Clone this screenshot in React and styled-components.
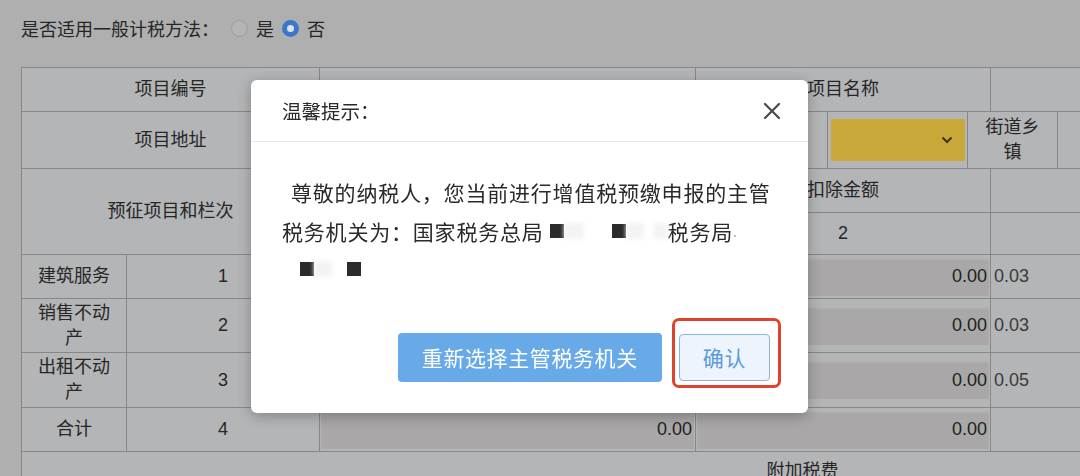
import React from 'react'
import styled, { createGlobalStyle } from 'styled-components'

const rows = [
  { label: '建筑服务', no: 1, a: '0.00', b: '0.00', rate: '0.03', h: 44 },
  { label: '销售不动产', no: 2, a: '0.00', b: '0.00', rate: '0.03', h: 54 },
  { label: '出租不动产', no: 3, a: '0.00', b: '0.00', rate: '0.05', h: 55 },
  { label: '合计', no: 4, a: '0.00', b: '0.00', rate: '', h: 44 },
]

const colWidths = [105, 193, 376, 132, 140, 23, 67, 526]

export default function App() {
  return (
    <>
      <GlobalStyle />
      <Page>
        <MethodRow>
          <Question>是否适用一般计税方法：</Question>
          <Radio />
          <span>是</span>
          <Radio $checked />
          <span>否</span>
        </MethodRow>

        <FormTable>
          <colgroup>
            {colWidths.map((w, i) => (
              <col key={i} style={{ width: w }} />
            ))}
          </colgroup>
          <tbody>
            <Row $h={44}>
              <Cell colSpan={2}>项目编号</Cell>
              <Cell></Cell>
              <Cell colSpan={3}>项目名称</Cell>
              <Cell colSpan={2}></Cell>
            </Row>
            <Row $h={57}>
              <Cell colSpan={2}>项目地址</Cell>
              <Cell></Cell>
              <Cell></Cell>
              <Cell>
                <Select>
                  <svg width="12" height="8" viewBox="0 0 12 8">
                    <path d="M1.5 1.5 L6 6 L10.5 1.5" fill="none" stroke="#3d3216" strokeWidth="2" />
                  </svg>
                </Select>
              </Cell>
              <Cell colSpan={2} $narrow>街道乡镇</Cell>
              <Cell></Cell>
            </Row>
            <Row $h={44}>
              <Cell colSpan={2} rowSpan={2}>预征项目和栏次</Cell>
              <Cell></Cell>
              <Cell colSpan={3}>扣除金额</Cell>
              <Cell colSpan={2}></Cell>
            </Row>
            <Row $h={42}>
              <Cell></Cell>
              <Cell colSpan={3}>2</Cell>
              <Cell colSpan={2}></Cell>
            </Row>
            {rows.map((r) => (
              <Row key={r.no} $h={r.h}>
                <Cell $narrow>{r.label}</Cell>
                <Cell>{r.no}</Cell>
                <Cell $flush>
                  <ReadOnly>{r.a}</ReadOnly>
                </Cell>
                <Cell colSpan={3} $flush>
                  <ReadOnly>{r.b}</ReadOnly>
                </Cell>
                <RateCell colSpan={2}>{r.rate}</RateCell>
              </Row>
            ))}
            <Row $h={40}>
              <Cell colSpan={8}>附加税费</Cell>
            </Row>
          </tbody>
        </FormTable>
      </Page>

      <Dialog>
        <DialogHeader>
          <Title>温馨提示：</Title>
          <svg width="18" height="18" viewBox="0 0 18 18">
            <path d="M2 2 L16 16 M16 2 L2 16" stroke="#4a4a4a" strokeWidth="2.2" strokeLinecap="round" />
          </svg>
        </DialogHeader>
        <DialogBody>
          <Line $indent>尊敬的纳税人，您当前进行增值税预缴申报的主管</Line>
          <Line>
            税务机关为：国家税务总局
            <Masked $gap={6} />
            <Blur $w={20} />
            <Masked $gap={28} />
            <Blur $w={18} />
            <Blur $w={14} $gap={10} />
            税务局<Dot>.</Dot>
          </Line>
          <Line>
            <Masked $gap={18} />
            <Blur $w={18} />
            <Masked $gap={15} />
          </Line>
        </DialogBody>
        <DialogFooter>
          <PrimaryButton>重新选择主管税务机关</PrimaryButton>
          <Highlight>
            <ConfirmButton>确认</ConfirmButton>
            <Marker />
          </Highlight>
        </DialogFooter>
      </Dialog>
    </>
  )
}

const GlobalStyle = createGlobalStyle`
  html, body {
    margin: 0;
    padding: 0;
    background: #afafaf;
  }
  body {
    font-family: "Liberation Sans", "Noto Sans CJK SC", sans-serif;
  }
`

const Page = styled.div`
  width: 1080px;
  height: 476px;
  overflow: hidden;
  padding-left: 21px;
  box-sizing: border-box;
  background: #afafaf;
  color: #262626;
  font-size: 18px;
`

const MethodRow = styled.div`
  height: 56px;
  display: flex;
  align-items: center;
  gap: 8px;
`

const Question = styled.span`
  margin-right: 4px;
`

const Radio = styled.span`
  width: 17px;
  height: 17px;
  border-radius: 50%;
  box-sizing: border-box;
  border: ${(p) => (p.$checked ? '5px solid #3b78c9' : '1px solid #9c9c9c')};
  background: ${(p) => (p.$checked ? '#dfe3e8' : '#b4b4b4')};
`

const FormTable = styled.table`
  margin-top: 11px;
  width: 1562px;
  table-layout: fixed;
  border-collapse: collapse;
  background: #b3b5b6;
  border: 1px solid #878787;
`

const Row = styled.tr`
  height: ${(p) => p.$h}px;
`

const Cell = styled.td`
  border: 1px solid #878787;
  padding: ${(p) => (p.$flush ? '2px 1px' : p.$narrow ? '0 10px' : '0 4px')};
  text-align: center;
  vertical-align: middle;
  line-height: 25px;
  box-sizing: border-box;
`

const RateCell = styled.td`
  border: 1px solid #878787;
  padding: 0 3px;
  text-align: left;
  color: #3a3a3a;
`

const ReadOnly = styled.div`
  height: 100%;
  min-height: 38px;
  box-sizing: border-box;
  background: #a9a7a7;
  box-shadow: inset 0 2px 2px rgba(255, 255, 255, 0.12);
  display: flex;
  align-items: center;
  justify-content: flex-end;
  padding-right: 2px;
  color: #1f1f1f;
`

const Select = styled.div`
  height: 42px;
  margin: 0 -2px 0 -1px;
  background: #c9a83a;
  display: flex;
  align-items: center;
  justify-content: flex-end;
  padding-right: 12px;
`

const Dialog = styled.div`
  position: fixed;
  left: 251px;
  top: 80px;
  width: 557px;
  height: 333px;
  background: #fff;
  border-radius: 6px;
  box-shadow: 0 3px 14px rgba(0, 0, 0, 0.28);
  color: #2a2a2a;
  font-family: "Noto Sans CJK SC", sans-serif;
`

const DialogHeader = styled.div`
  height: 62px;
  box-sizing: border-box;
  padding: 0 27px 0 31px;
  display: flex;
  align-items: center;
  justify-content: space-between;
  border-bottom: 1px solid #e8e8e8;
`

const Title = styled.div`
  font-size: 19.5px;
`

const DialogBody = styled.div`
  padding: 31px 31px 0;
  font-size: 21px;
  letter-spacing: 0.8px;
  line-height: 38.5px;
`

const Line = styled.div`
  white-space: nowrap;
  height: 38.5px;
  display: flex;
  align-items: center;
  padding-left: ${(p) => (p.$indent ? '9px' : '0')};
`

const Masked = styled.span`
  display: inline-block;
  width: 14px;
  height: 14px;
  background: #2b2b2b;
  margin-left: ${(p) => p.$gap}px;
  filter: blur(0.4px);
`

const Blur = styled.span`
  display: inline-block;
  width: ${(p) => p.$w}px;
  height: 16px;
  margin-left: ${(p) => p.$gap || 0}px;
  background: #f3f3f3;
  filter: blur(2px);
`

const Dot = styled.span`
  color: #aaa;
  font-size: 14px;
`

const DialogFooter = styled.div`
  margin-top: 44px;
  padding-right: 38px;
  display: flex;
  justify-content: flex-end;
  align-items: center;
  gap: 17px;
`

const PrimaryButton = styled.button`
  height: 49px;
  padding: 0 24px;
  border: none;
  border-radius: 4px;
  background: #68aae7;
  color: #fff;
  font-family: "Noto Sans CJK SC", sans-serif;
  font-size: 21px;
  letter-spacing: 0.6px;
`

const Highlight = styled.div`
  position: relative;
  display: flex;
`

const ConfirmButton = styled.button`
  height: 47px;
  padding: 0 23px;
  border: 1px solid #8db3dc;
  border-radius: 4px;
  background: #edf4fc;
  color: #5b9ad8;
  font-family: "Noto Sans CJK SC", sans-serif;
  font-size: 21px;
  letter-spacing: 0.6px;
`

const Marker = styled.span`
  position: absolute;
  top: -16px;
  left: -7px;
  right: -11px;
  bottom: -7px;
  border: 3px solid #e0432b;
  border-radius: 7px;
  pointer-events: none;
`
